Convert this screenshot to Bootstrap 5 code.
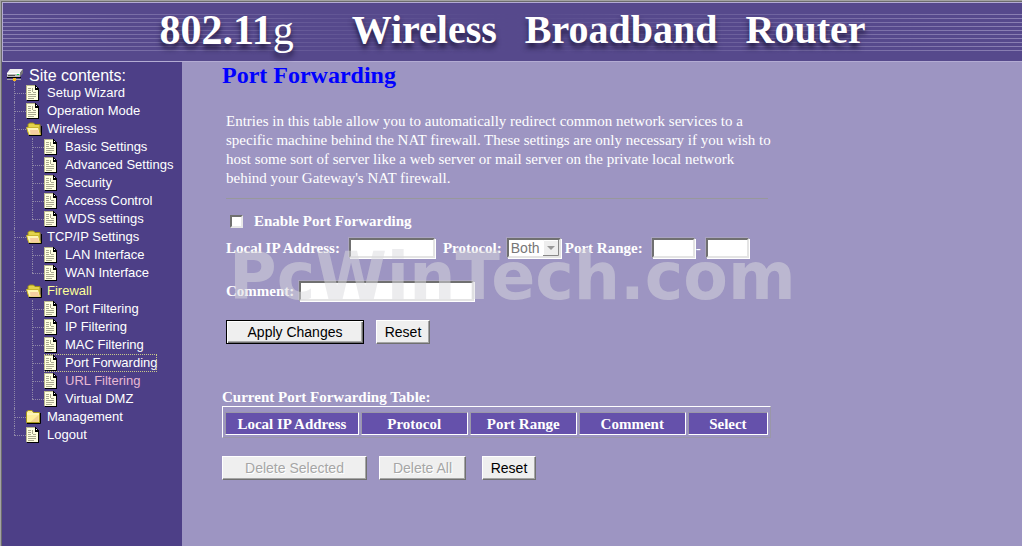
<!DOCTYPE html>
<html lang="en">
<head>
<meta charset="utf-8">
<meta name="viewport" content="width=device-width, initial-scale=1">
<title>802.11g Wireless Broadband Router</title>
<link href="https://cdn.jsdelivr.net/npm/bootstrap@5.3.0/dist/css/bootstrap.min.css" rel="stylesheet">
<style>
  body { background: #9d95c2; color: #fff; font: 15px/19px "Liberation Serif", serif; }
  .frame { border-top: 1px solid #a3a3a3; border-left: 1px solid #a3a3a3; box-shadow: inset 1px 1px #6c6c6c; padding: 1px 0 0 1px; }
  .banner { background: #56498c; border: solid #b3abd3; border-width: 1px 0 1px 1px; height: 60px; position: relative; }
  .banner::before { content: ""; position: absolute; inset: 11px 0 auto 0; height: 37px;
    background: repeating-linear-gradient(#8a80b3 0 1px, transparent 1px 4px);
    -webkit-mask-image: linear-gradient(90deg, #000, rgba(0,0,0,.25) 32%, transparent 50%, rgba(0,0,0,.3) 65%, #000); }
  .banner h1 { position: relative; font-size: 40px; line-height: 54px; font-weight: 700; text-shadow: 0 5px 5px rgba(30,22,60,.85); }
  .banner .model { font-size: 42px; margin-right: 58px; }
  .banner .product { gap: 28px; }
  .site-nav { width: 180px; background: #4d3f87; font: 13px/18px "Liberation Sans", sans-serif; padding: 6px 0 0 5px; }
  .site-nav .site-title { font-size: 16px; line-height: 16px; gap: 4px; }
  .site-nav ul { margin: 0 0 0 7px; padding: 0; list-style: none; }
  .site-nav li ul { margin-left: 6px; }
  .site-nav li { padding-left: 12px; position: relative; }
  .site-nav li::before { content: ""; position: absolute; left: 0; top: 0; bottom: 0; border-left: 1px dotted #9088a8; }
  .site-nav li:last-child::before { bottom: auto; height: 9px; }
  .site-nav li::after { content: ""; position: absolute; left: 0; top: 9px; width: 12px; border-top: 1px dotted #9088a8; }
  .site-nav a { display: flex; width: fit-content; color: #fff; text-decoration: none; height: 18px; white-space: nowrap; }
  .site-nav a svg { width: 16px; height: 18px; margin-right: 5px; flex: none; }
  .site-nav a.opened { color: #ffff99; }
  .site-nav a.visited-link { color: #e8b9d4; }
  .site-nav a.current { outline: 1px dotted #c9c98a; outline-offset: -1px; }
  .page-main { padding: 0 40px; }
  .page-main h2 { font-size: 24px; line-height: 26px; font-weight: 700; color: #00f; margin-bottom: 24px; }
  .page-body { max-width: 549px; }
  .panel-form { padding-left: 4px; position: relative; }
  .panel-form hr { border-top: 1px solid #98989c; opacity: 1; margin: 10px 3px 13px 0; }
  .panel-form label, .caption-text { font-weight: 700; white-space: nowrap; }
  .caption-text { line-height: 18px; }
  .row-enable { margin-bottom: 7px; }
  .row-ports { margin-bottom: 23px; }
  .row-actions { margin: 19px 0 44px; }
  .row-delete { margin-top: 18px; }
  .field { background: #fff; border: 2px solid; border-color: #707070 #e4e4e4 #e4e4e4 #707070; box-shadow: 1px 1px #fff, -1px -1px #aaa4c0; height: 20px; border-radius: 0; padding: 0 2px; margin: 0 1px; font: 14px/16px "Liberation Sans", sans-serif; color: #000; }
  .field-ip { width: 86px; }
  .field-port { width: 43px; }
  .field-note { width: 175px; }
  select.field { appearance: none; width: 54px; color: #777; opacity: 1; padding: 0 0 0 2px;
    background: #fff url("data:image/svg+xml,%3Csvg xmlns='http://www.w3.org/2000/svg' width='16' height='16'%3E%3Cpath fill='%23eee' d='M0 0h16v16H0z'/%3E%3Cpath fill='none' stroke='%23888' d='M0 15.5h15.5V0'/%3E%3Cpath fill='none' stroke='%23fff' d='M.5 15V.5H15'/%3E%3Cpath fill='%23999' d='M4 6h8L8 10z'/%3E%3C/svg%3E") right center no-repeat; }
  .tick { appearance: none; width: 13px; height: 13px; background: #fff; border: 2px solid; border-color: #707070 #e8e8e8 #e8e8e8 #707070; margin: 0 11px 0 4px; }
  .tick:checked { background: #fff linear-gradient(#222, #222) center/5px 5px no-repeat; }
  .push { height: 24px; border: 1px solid; border-color: #fff #707070 #707070 #fff; border-radius: 0; background: #efefef; padding: 0; font: 14px/20px "Liberation Sans", sans-serif; color: #000; box-shadow: inset -1px -1px #a5a5a5; }
  .push:disabled { color: #a6a6a6; text-shadow: 1px 1px #fff; }
  .push.primary-push { border-color: #000; box-shadow: inset 1px 1px #fff, inset -1px -1px #707070, inset -2px -2px #aaa; }
  .w-apply { width: 138px; margin-right: 12px; }
  .w-reset { width: 54px; }
  .w-delsel { width: 145px; margin-right: 12px; }
  .w-delall { width: 87px; margin-right: 16px; }
  .rules { width: 100%; border-collapse: separate; border-spacing: 2px; border: 1px solid; border-color: #fff #9a97a8 #9a97a8 #fff; padding-top: 3px; }
  .rules th { background: #6551ab; border: 1px solid; border-color: #9a97a8 #fff #fff #9a97a8; text-align: center; padding: 2px 0 0; line-height: 19px; }
  .overlay-brand { position: absolute; left: 3px; top: 1px; font: 700 65px/75px "DejaVu Sans", sans-serif; color: rgba(218,218,222,.5); pointer-events: none; }
</style>
</head>
<body>
<svg class="d-none" aria-hidden="true">
  <symbol id="page" viewBox="0 0 16 18">
    <path d="M1 2h8l4 4v11H1z" fill="#000"/>
    <path d="M0 1h9l3 4v11H0z" fill="#ffffe0"/>
    <path d="M0 1h9v1H1v14H0z" fill="#b9b68f"/>
    <path d="M9 1l3 4H9z" fill="#fff"/><path d="M9 1h1v1h1v1h1v1h1v2H9z" fill="#000"/><path d="M10 3h1v1h-1z" fill="#fff"/>
    <path d="M2 4.500h3M2 6.500h3M2 8.500h3M6.500 4v4M7 8.500h3M2 10.500h8M2 12.500h8M2 14.500h6" stroke="#aaa98f" fill="none"/>
    <path d="M12.500 5v12M1 16.500h12" stroke="#000"/>
  </symbol>
  <symbol id="folder-open" viewBox="0 0 16 18">
    <path d="M2 12V4.500L3.500 3h4L9 4.500h5V14H3z" fill="#e3d34a" stroke="#9c8d15"/>
    <path d="M.5 7.500h12l2 7.500H3z" fill="#fff6b5" stroke="#c9b62c"/>
    <path d="M4 10h8l1.500 4.500H4.500z" fill="#f6cfa0"/>
    <path d="M3 15.500h12.500V6" fill="none" stroke="#000"/>
  </symbol>
  <symbol id="folder-shut" viewBox="0 0 16 18">
    <path d="M1 15.500h13.500V5" fill="none" stroke="#000"/>
    <path d="M.5 14.500V4L2 2.500h4L7.500 4.500h6v10z" fill="#fff099" stroke="#a8981c"/>
    <path d="M1 6h12" stroke="#fffbd6"/><path d="M5 13.500L12.500 7v7H5z" fill="#f3d391"/>
  </symbol>
</svg>
<div class="frame d-flex flex-column min-vh-100">
  <header class="banner">
    <h1 class="d-flex justify-content-center m-0 text-nowrap"><span class="model">802.11<span class="fw-normal">g</span></span><span class="product d-flex"><span>Wireless</span><span>Broadband</span><span>Router</span></span></h1>
  </header>
  <div class="d-flex flex-grow-1">
    <nav class="site-nav flex-shrink-0" aria-label="Site contents">
      <div class="site-title d-flex">
        <svg width="18" height="16" viewBox="0 0 18 16" aria-hidden="true"><path d="M0 5l3-4h13l-3 4z" fill="#eee"/><path d="M0 5h13v4H0z" fill="#bbb"/><path d="M13 5l3-4v4l-3 4z" fill="#777"/><path d="M0 5.500h13" stroke="#fff"/><path d="M1 7.500h7" stroke="#555"/><path d="M10 6h2v1h-2z" fill="#0d4"/><path d="M0 9.500h14" stroke="#000"/><path d="M0 11.500h14" stroke="#aaa"/><path d="M6 10h3v3H6z" fill="#f5b21d"/><path d="M7.500 13v3" stroke="#9088a8" stroke-dasharray="1 1"/></svg>
        <span>Site contents:</span>
      </div>
      <ul class="pt-0">
        <li><a href="#"><svg><use href="#page"/></svg>Setup Wizard</a></li>
        <li><a href="#"><svg><use href="#page"/></svg>Operation Mode</a></li>
        <li><a href="#"><svg><use href="#folder-open"/></svg>Wireless</a>
          <ul>
            <li><a href="#"><svg><use href="#page"/></svg>Basic Settings</a></li>
            <li><a href="#"><svg><use href="#page"/></svg>Advanced Settings</a></li>
            <li><a href="#"><svg><use href="#page"/></svg>Security</a></li>
            <li><a href="#"><svg><use href="#page"/></svg>Access Control</a></li>
            <li><a href="#"><svg><use href="#page"/></svg>WDS settings</a></li>
          </ul></li>
        <li><a href="#"><svg><use href="#folder-open"/></svg>TCP/IP Settings</a>
          <ul>
            <li><a href="#"><svg><use href="#page"/></svg>LAN Interface</a></li>
            <li><a href="#"><svg><use href="#page"/></svg>WAN Interface</a></li>
          </ul></li>
        <li><a href="#" class="opened"><svg><use href="#folder-open"/></svg>Firewall</a>
          <ul>
            <li><a href="#"><svg><use href="#page"/></svg>Port Filtering</a></li>
            <li><a href="#"><svg><use href="#page"/></svg>IP Filtering</a></li>
            <li><a href="#"><svg><use href="#page"/></svg>MAC Filtering</a></li>
            <li><a href="#" class="current" aria-current="page"><svg><use href="#page"/></svg>Port Forwarding</a></li>
            <li><a href="#" class="visited-link"><svg><use href="#page"/></svg>URL Filtering</a></li>
            <li><a href="#"><svg><use href="#page"/></svg>Virtual DMZ</a></li>
          </ul></li>
        <li><a href="#"><svg><use href="#folder-shut"/></svg>Management</a></li>
        <li><a href="#"><svg><use href="#page"/></svg>Logout</a></li>
      </ul>
    </nav>
    <main class="page-main flex-grow-1">
      <h2>Port Forwarding</h2>
      <div class="page-body">
        <form class="panel-form">
          <p class="m-0">Entries in this table allow you to automatically redirect common network services to a specific machine behind the NAT firewall. These settings are only necessary if you wish to host some sort of server like a web server or mail server on the private local network behind your Gateway's NAT firewall.</p>
          <hr>
          <div class="row-enable d-flex align-items-center">
            <input class="tick" type="checkbox" id="enable"><label for="enable">Enable Port Forwarding</label>
          </div>
          <div class="position-relative">
            <div class="row-ports d-flex align-items-center">
              <label for="ip" class="me-2">Local IP Address:</label><input class="field field-ip me-2" id="ip" type="text">
              <label for="proto" class="me-1">Protocol:</label><select class="field me-1" id="proto" disabled><option>Both</option></select>
              <label for="from" class="me-2">Port Range:</label><input class="field field-port" id="from" type="text"><label for="to" class="fw-normal me-1">-</label><input class="field field-port" id="to" type="text" aria-label="Last port">
            </div>
            <div class="d-flex align-items-center">
              <label for="note" class="me-1">Comment:</label><input class="field field-note" id="note" type="text">
            </div>
            <div class="overlay-brand" aria-hidden="true">PcWinTech.com</div>
          </div>
          <div class="row-actions d-flex">
            <button type="submit" class="push primary-push w-apply">Apply Changes</button><button type="reset" class="push w-reset">Reset</button>
          </div>
        </form>
        <form>
          <div class="caption-text" id="cap">Current Port Forwarding Table:</div>
          <table class="rules" aria-labelledby="cap">
            <colgroup><col style="width:25%"><col style="width:20%"><col style="width:20%"><col style="width:20%"><col style="width:15%"></colgroup>
            <thead><tr><th>Local IP Address</th><th>Protocol</th><th>Port Range</th><th>Comment</th><th>Select</th></tr></thead>
          </table>
          <div class="row-delete d-flex">
            <button type="button" class="push w-delsel" disabled>Delete Selected</button><button type="button" class="push w-delall" disabled>Delete All</button><button type="reset" class="push w-reset">Reset</button>
          </div>
        </form>
      </div>
    </main>
  </div>
</div>
<script src="https://cdn.jsdelivr.net/npm/bootstrap@5.3.0/dist/js/bootstrap.bundle.min.js"></script>
</body>
</html>
